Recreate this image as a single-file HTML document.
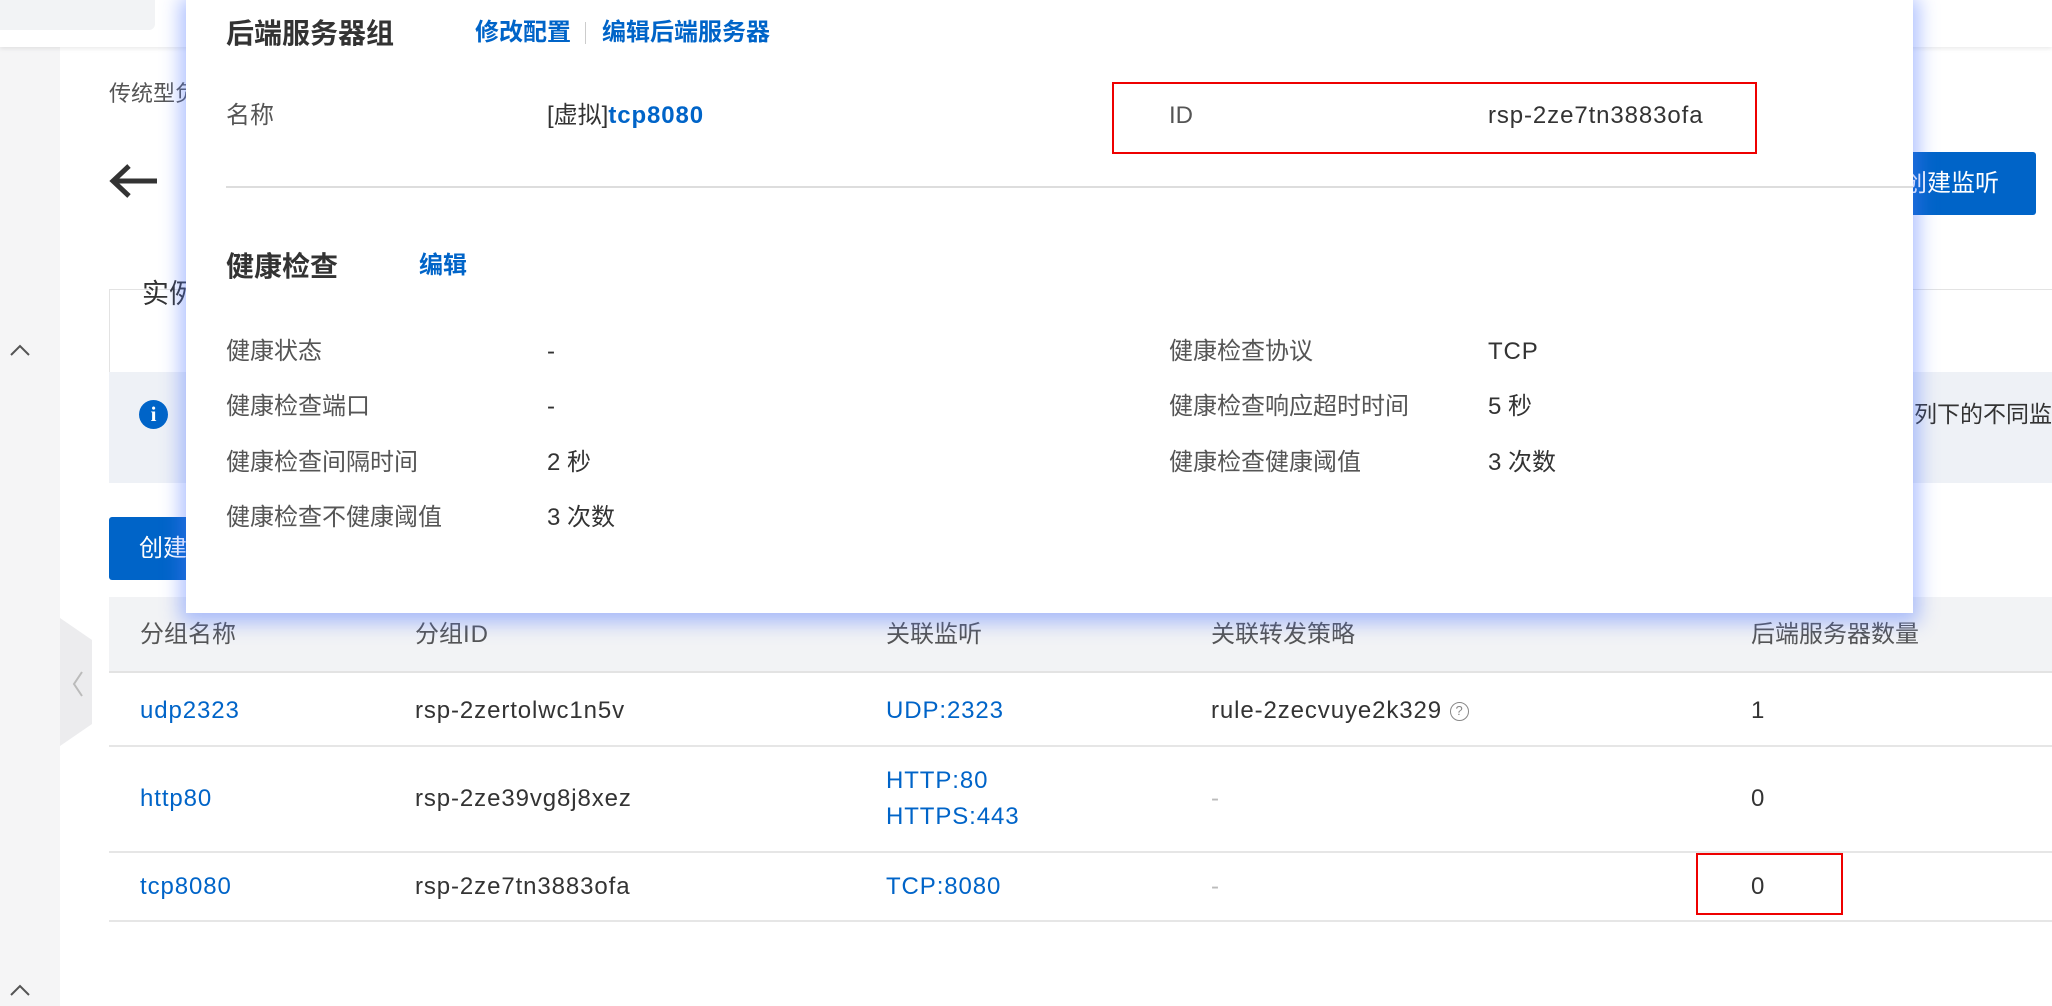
<!DOCTYPE html>
<html><head><meta charset="utf-8"><style>
*{margin:0;padding:0;box-sizing:border-box}
body{width:2052px;height:1006px;overflow:hidden;background:#fff;position:relative;font-family:"Liberation Sans","Noto Sans CJK SC",sans-serif;color:#333;font-size:24px}
.a{position:absolute;white-space:nowrap;line-height:1}
.b{color:#0064c8}
.g{color:#555}
.l{letter-spacing:0.9px}
</style></head><body>
<div class="a" style="left:0;top:0;width:60px;height:1006px;background:#f5f5f6"></div>
<div class="a" style="left:0;top:0;width:2052px;height:47px;background:#fff;box-shadow:0 2px 4px rgba(0,0,0,.08)"></div>
<div class="a" style="left:0;top:0;width:155px;height:30px;background:#f2f3f5;border-radius:0 0 6px 0"></div>
<svg class="a" style="left:8px;top:342px" width="24" height="16"><path d="M3 13L12 4L21 13" stroke="#555" stroke-width="2" fill="none"/></svg>
<svg class="a" style="left:8px;top:982px" width="24" height="16"><path d="M3 13L12 4L21 13" stroke="#555" stroke-width="2" fill="none"/></svg>
<svg class="a" style="left:60px;top:618px" width="32" height="128"><path d="M0 0 L32 22 L32 106 L0 128Z" fill="#ececee"/><path d="M22 54 L14 66 L22 78" stroke="#bbb" stroke-width="2" fill="none"/></svg>

<div class="a g" style="left:109px;top:83px;font-size:22px">传统型负载均衡</div>
<svg class="a" style="left:109px;top:163px" width="50" height="36"><path d="M48 18H6M20 3L4 18L20 33" stroke="#333" stroke-width="5" fill="none"/></svg>
<div class="a" style="left:1885px;top:152px;width:151px;height:63px;background:#0064c8;border-radius:3px;color:#fff;font-size:24px;padding:20px 0 0 18px">创建监听</div>
<div class="a" style="left:109px;top:289px;width:1943px;height:85px;border:1px solid #e3e3e3;border-right:none"></div>
<div class="a" style="left:142px;top:281px;font-size:27px">实例</div>
<div class="a" style="left:109px;top:372px;width:1943px;height:111px;background:#eef1f6"></div>
<div class="a" style="left:139px;top:400px;width:29px;height:29px;border-radius:50%;background:#0064c8;color:#fff;font-size:21px;font-weight:bold;text-align:center;line-height:29px;font-family:'Liberation Serif',serif">i</div>
<div class="a" style="left:1914px;top:403px;font-size:23px">列下的不同监听</div>
<div class="a" style="left:109px;top:517px;width:120px;height:63px;background:#0064c8;border-radius:3px;color:#fff;font-size:24px;padding:20px 0 0 30px">创建</div>

<div class="a" style="left:109px;top:597px;width:1943px;height:76px;background:#f2f3f5;border-bottom:2px solid #e3e3e3"></div>
<div class="a g" style="left:140px;top:623px">分组名称</div>
<div class="a g" style="left:415px;top:623px">分组<span class="l">ID</span></div>
<div class="a g" style="left:886px;top:623px">关联监听</div>
<div class="a g" style="left:1211px;top:623px">关联转发策略</div>
<div class="a g" style="left:1751px;top:623px">后端服务器数量</div>
<div class="a" style="left:109px;top:745px;width:1943px;height:2px;background:#e6e6e6"></div>
<div class="a" style="left:109px;top:851px;width:1943px;height:2px;background:#e6e6e6"></div>
<div class="a" style="left:109px;top:920px;width:1943px;height:2px;background:#e6e6e6"></div>
<div class="a b l" style="left:140px;top:699px">udp2323</div>
<div class="a l" style="left:415px;top:699px">rsp-2zertolwc1n5v</div>
<div class="a b l" style="left:886px;top:699px">UDP:2323</div>
<div class="a l" style="left:1211px;top:699px">rule-2zecvuye2k329 <span style="display:inline-block;width:19px;height:19px;border:1.5px solid #888;border-radius:50%;font-size:13px;color:#888;text-align:center;line-height:16px;vertical-align:middle;letter-spacing:0">?</span></div>
<div class="a" style="left:1751px;top:699px">1</div>
<div class="a b l" style="left:140px;top:787px">http80</div>
<div class="a l" style="left:415px;top:787px">rsp-2ze39vg8j8xez</div>
<div class="a b l" style="left:886px;top:769px">HTTP:80</div>
<div class="a b l" style="left:886px;top:805px">HTTPS:443</div>
<div class="a" style="left:1211px;top:787px;color:#bbb">-</div>
<div class="a" style="left:1751px;top:787px">0</div>
<div class="a b l" style="left:140px;top:875px">tcp8080</div>
<div class="a l" style="left:415px;top:875px">rsp-2ze7tn3883ofa</div>
<div class="a b l" style="left:886px;top:875px">TCP:8080</div>
<div class="a" style="left:1211px;top:875px;color:#bbb">-</div>
<div class="a" style="left:1751px;top:875px">0</div>
<div class="a" style="left:1696px;top:853px;width:147px;height:62px;border:2px solid #e00"></div>

<div class="a" style="left:186px;top:0;width:1727px;height:613px;background:#fff;box-shadow:0 4px 18px 6px rgba(80,120,255,.45)"></div>
<div class="a" style="left:226px;top:20px;font-size:28px;font-weight:bold;color:#333">后端服务器组</div>
<div class="a b" style="left:475px;top:21px;font-size:24px;font-weight:bold">修改配置</div>
<div class="a" style="left:585px;top:22px;width:1px;height:22px;background:#ccc"></div>
<div class="a b" style="left:602px;top:21px;font-size:24px;font-weight:bold">编辑后端服务器</div>
<div class="a g" style="left:226px;top:104px">名称</div>
<div class="a" style="left:547px;top:104px">[虚拟]<span class="b l" style="font-weight:bold">tcp8080</span></div>
<div class="a" style="left:1112px;top:82px;width:645px;height:72px;border:2px solid #e00"></div>
<div class="a g" style="left:1169px;top:104px">ID</div>
<div class="a l" style="left:1488px;top:104px">rsp-2ze7tn3883ofa</div>
<div class="a" style="left:226px;top:186px;width:1687px;height:2px;background:#ddd"></div>
<div class="a" style="left:226px;top:253px;font-size:28px;font-weight:bold">健康检查</div>
<div class="a b" style="left:419px;top:254px;font-size:24px;font-weight:bold">编辑</div>
<div class="a g" style="left:226px;top:340px">健康状态</div>
<div class="a" style="left:547px;top:340px">-</div>
<div class="a g" style="left:226px;top:395px">健康检查端口</div>
<div class="a" style="left:547px;top:395px">-</div>
<div class="a g" style="left:226px;top:451px">健康检查间隔时间</div>
<div class="a" style="left:547px;top:451px">2 秒</div>
<div class="a g" style="left:226px;top:506px">健康检查不健康阈值</div>
<div class="a" style="left:547px;top:506px">3 次数</div>
<div class="a g" style="left:1169px;top:340px">健康检查协议</div>
<div class="a l" style="left:1488px;top:340px">TCP</div>
<div class="a g" style="left:1169px;top:395px">健康检查响应超时时间</div>
<div class="a" style="left:1488px;top:395px">5 秒</div>
<div class="a g" style="left:1169px;top:451px">健康检查健康阈值</div>
<div class="a" style="left:1488px;top:451px">3 次数</div>
</body></html>
